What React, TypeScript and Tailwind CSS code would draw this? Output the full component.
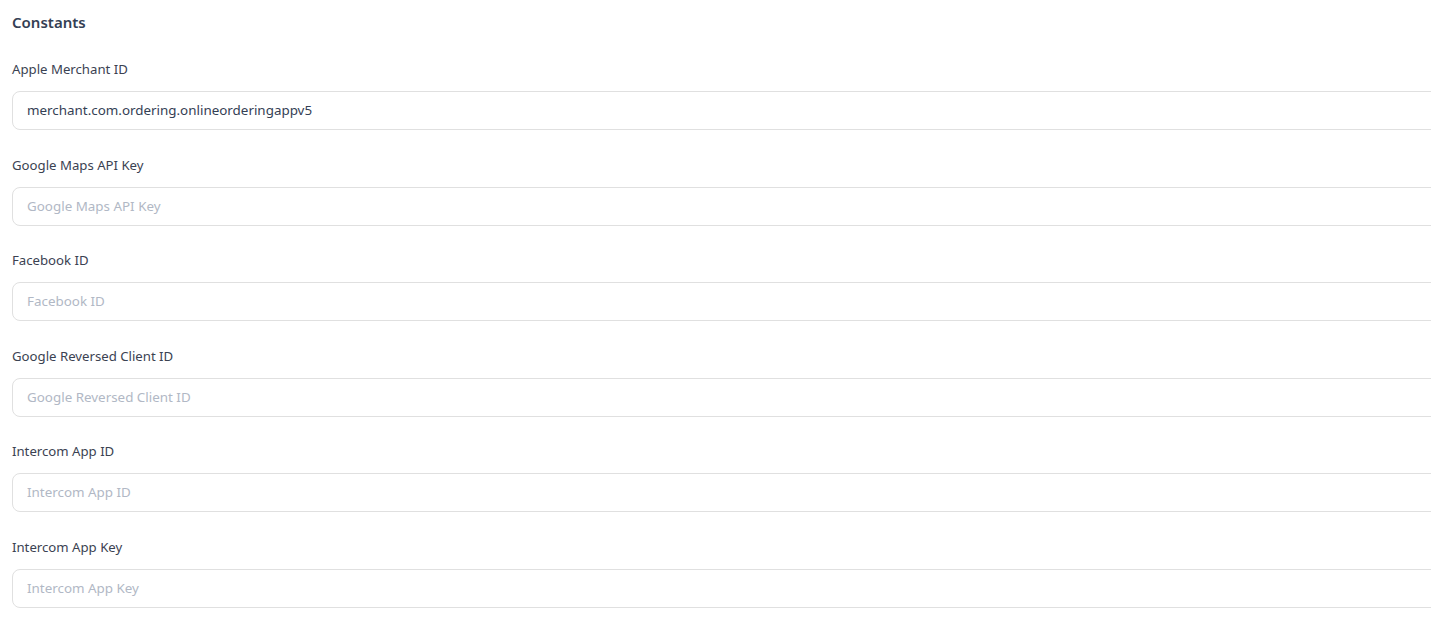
import { useState } from 'react'

const fields = [
  { id: 'appleMerchantId', label: 'Apple Merchant ID', value: 'merchant.com.ordering.onlineorderingappv5' },
  { id: 'googleMapsApiKey', label: 'Google Maps API Key', value: '' },
  { id: 'facebookId', label: 'Facebook ID', value: '' },
  { id: 'googleReversedClientId', label: 'Google Reversed Client ID', value: '' },
  { id: 'intercomAppId', label: 'Intercom App ID', value: '' },
  { id: 'intercomAppKey', label: 'Intercom App Key', value: '' },
]

export default function App() {
  const [values, setValues] = useState<Record<string, string>>(
    Object.fromEntries(fields.map((f) => [f.id, f.value]))
  )

  return (
    <div className="min-h-screen overflow-hidden bg-white font-['Noto_Sans',sans-serif]">
      <div className="w-[1450px] pl-3 pt-3">
        <h2 className="text-[15px] font-semibold leading-5 text-[#344054]">Constants</h2>

        <div className="mt-[27px] flex flex-col gap-[24.6px]">
          {fields.map((field) => (
            <div key={field.id} className="flex flex-col">
              <label htmlFor={field.id} className="text-[13.2px] leading-5 text-[#3b4252]">
                {field.label}
              </label>
              <input
                id={field.id}
                type="text"
                value={values[field.id]}
                placeholder={field.label}
                onChange={(e) => setValues({ ...values, [field.id]: e.target.value })}
                className="mt-3 h-[39px] w-full rounded-lg border border-[#e0e0e0] px-[14px] pb-px text-[13.4px] text-[#344054] outline-none placeholder:text-[#b1b8c5]"
              />
            </div>
          ))}
        </div>
      </div>
    </div>
  )
}
